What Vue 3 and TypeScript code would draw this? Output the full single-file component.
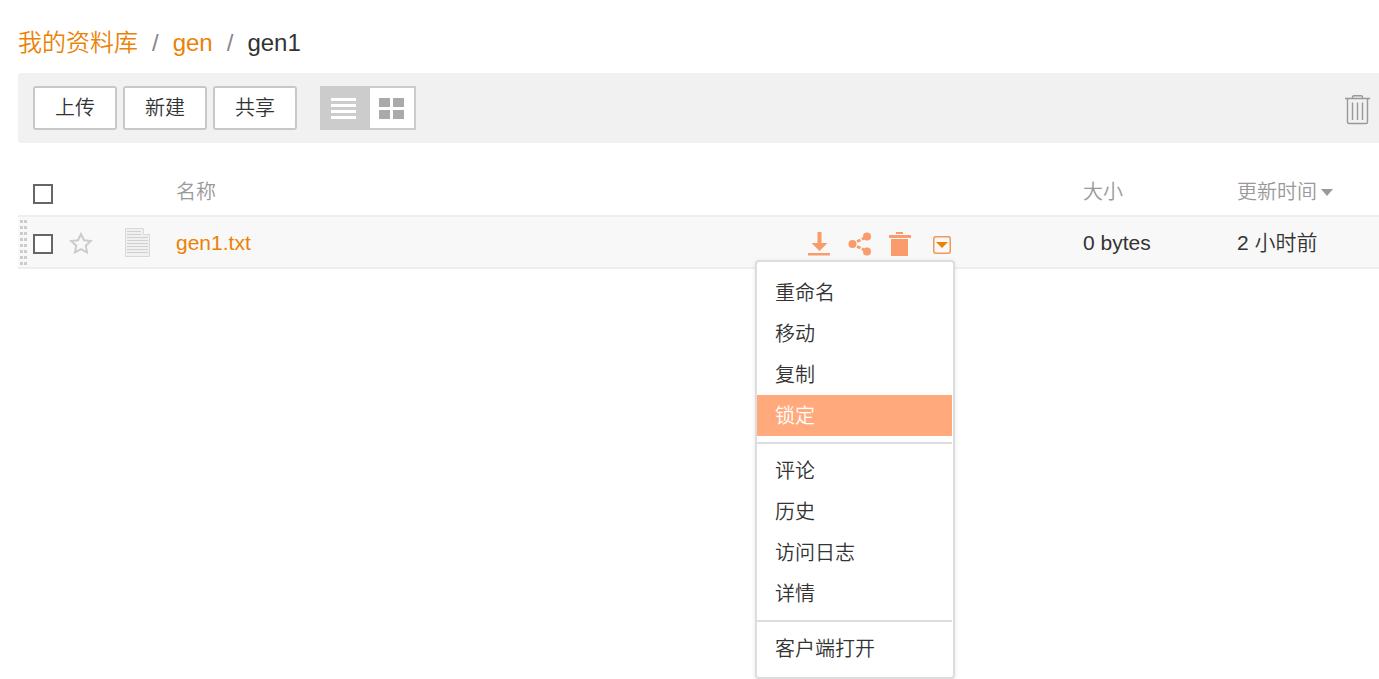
<script setup lang="ts">
import { ref } from 'vue'

interface MenuGroup {
  id: number
  items: string[]
}

const view = ref<'list' | 'grid'>('list')
const menuOpen = ref(true)
const active = ref('锁定')
const actions = ['上传', '新建', '共享']
const groups: MenuGroup[] = [
  { id: 1, items: ['重命名', '移动', '复制', '锁定'] },
  { id: 2, items: ['评论', '历史', '访问日志', '详情'] },
  { id: 3, items: ['客户端打开'] },
]
</script>

<template>
  <main class="library">
    <nav class="crumbs" aria-label="路径">
      <a href="#library">我的资料库</a>
      <span class="slash">/</span>
      <a href="#gen">gen</a>
      <span class="slash">/</span>
      <span>gen1</span>
    </nav>

    <div class="toolbar">
      <div class="buttons">
        <button v-for="a in actions" :key="a" type="button" class="btn">{{ a }}</button>
      </div>
      <div class="switch">
        <button type="button" class="mode" :class="{ on: view === 'list' }" aria-label="列表" @click="view = 'list'">
          <svg width="26" height="22" viewBox="0 -1 26 22" fill="currentColor">
            <path d="M0 0h25v3H0zM0 6h25v3H0zM0 12h25v3H0zM0 18h25v3H0z" />
          </svg>
        </button>
        <button type="button" class="mode" :class="{ on: view === 'grid' }" aria-label="网格" @click="view = 'grid'">
          <svg width="26" height="22" viewBox="0 -1 26 22" fill="currentColor">
            <path d="M0 0h11v9H0zM14 0h11v9H14zM0 12h11v9H0zM14 12h11v9H14z" />
          </svg>
        </button>
      </div>
      <button type="button" class="recycle" aria-label="回收站">
        <svg width="25" height="30" viewBox="0 0 25 30" fill="none" stroke="#999" stroke-width="1.4">
          <path d="M0 3.500H25M7.500 3.500V2Q7.500 .7 9 .7H16Q17.500 .7 17.500 2V3.500" />
          <path d="M2.500 3.500V27Q2.500 28.500 4 28.500H21Q22.500 28.500 22.500 27V3.500" />
          <path d="M7.500 7.500V25M12.500 7.500V25M17.500 7.500V25" />
        </svg>
      </button>
    </div>

    <table class="files">
      <colgroup>
        <col class="c-check" /><col class="c-star" /><col class="c-icon" /><col /><col class="c-size" /><col class="c-time" />
      </colgroup>
      <thead>
        <tr>
          <th class="check"><input type="checkbox" aria-label="全选" /></th>
          <th></th>
          <th></th>
          <th>名称</th>
          <th>大小</th>
          <th><a href="#time" class="sort">更新时间<svg width="12" height="7" viewBox="0 0 12 7"><path d="M0 0h12L6 7z" fill="#999" /></svg></a></th>
        </tr>
      </thead>
      <tbody>
        <tr>
          <td class="check">
            <div class="check-line">
              <svg class="grip" width="7" height="45" viewBox="0 0 7 45" fill="#ccc">
                <path v-for="n in 8" :key="n" :d="`M0 ${(n - 1) * 6}h3v3h-3zM4 ${(n - 1) * 6}h3v3h-3z`" />
              </svg>
              <input type="checkbox" aria-label="选择 gen1.txt" />
            </div>
          </td>
          <td>
            <button type="button" class="icon star" aria-label="星标">
              <svg width="24" height="22" viewBox="0 0 24 22" fill="none" stroke="#ccc" stroke-width="2">
                <path d="M12 2L15 8.200 21.800 9 16.800 13.700 18 20.400 12 17.200 6 20.400 7.200 13.700 2.200 9 9 8.200z" />
              </svg>
            </button>
          </td>
          <td>
            <svg class="doc" width="26" height="29" viewBox="0 0 26 29">
              <path d="M1.500 .5H19L25.500 7V28.500H1.500z" fill="#f0f0f0" stroke="#d8d8d8" />
              <path d="M19.500 .5V6.500H25.500" fill="#fafafa" stroke="#d8d8d8" />
              <path d="M3 3.500H17M3 6.500H17M3 9.500H24M3 12.500H24M3 15.500H24M3 18.500H24M3 21.500H24M3 24.500H24" stroke="#d0d0d0" />
            </svg>
          </td>
          <td>
            <div class="name-line">
              <a href="#gen1.txt" class="name">gen1.txt</a>
              <div class="ops">
                <button type="button" class="icon" aria-label="下载">
                  <svg width="24" height="25" viewBox="0 0 24 25" fill="#f99b6b">
                    <path d="M9.500 1h4v11h6l-8 8-8-8h6zM0 22h22v2.500H0z" />
                  </svg>
                </button>
                <button type="button" class="icon" aria-label="共享">
                  <svg width="24" height="25" viewBox="0 0 24 25" fill="#f99b6b">
                    <circle cx="4.500" cy="13" r="4" /><circle cx="19" cy="5.500" r="4" /><circle cx="19" cy="20.500" r="4" />
                    <path d="M9 10.600L12.500 8.900M13.800 8.300L16 7.200M9 15.400L12.500 17.100M13.800 17.700L16 18.800" stroke="#f99b6b" stroke-width="2.800" />
                  </svg>
                </button>
                <button type="button" class="icon" aria-label="删除">
                  <svg width="24" height="25" viewBox="0 0 24 25" fill="#f99b6b">
                    <path d="M8 1h7v2H8zM1 4h22v3H1zM3 8h17v17H3z" />
                  </svg>
                </button>
                <div class="more">
                  <button type="button" class="icon" aria-label="更多" @click="menuOpen = !menuOpen">
                    <svg width="18" height="18" viewBox="0 0 18 18">
                      <rect x=".75" y=".75" width="16.500" height="16.500" rx="2" fill="none" stroke="#f0975a" stroke-width="1.500" />
                      <path d="M3 6h12l-6 6z" fill="#eb8205" />
                    </svg>
                  </button>
                  <div v-if="menuOpen" class="menu" role="menu">
                    <div v-for="g in groups" :key="g.id" class="group">
                      <button
                        v-for="item in g.items" :key="item" type="button" role="menuitem"
                        class="item" :class="{ active: item === active }" @mouseenter="active = item"
                      >{{ item }}</button>
                    </div>
                  </div>
                </div>
              </div>
            </div>
          </td>
          <td class="text">0 bytes</td>
          <td class="text">2 小时前</td>
        </tr>
      </tbody>
    </table>
  </main>
</template>

<style>
body {
  margin: 0;
  background: #fff;
}
</style>

<style scoped>
.library {
  box-sizing: border-box;
  min-height: 100vh;
  padding: 24px 0 0 18px;
  color: #333;
  font-family: "Liberation Sans", "Noto Sans CJK SC", sans-serif;
  font-size: 21px;
  font-weight: 350;
}
a {
  color: #eb8205;
  text-decoration: none;
}
button {
  box-sizing: border-box;
  margin: 0;
  padding: 0;
  border: 0;
  background: none;
  color: inherit;
  font: inherit;
  cursor: pointer;
}
svg {
  display: block;
}
.crumbs {
  display: flex;
  height: 37px;
  margin-bottom: 12px;
  font-size: 24px;
  line-height: 37px;
}
.slash {
  margin: 0 14px;
  color: #888;
}
.toolbar {
  display: flex;
  align-items: center;
  height: 70px;
  padding: 0 9px 0 15px;
  box-sizing: border-box;
  border-radius: 3px 0 0 3px;
  background: #f1f1f1;
}
.buttons {
  display: flex;
  gap: 6px;
}
.btn {
  width: 84px;
  height: 44px;
  padding-top: 1px;
  border: 2px solid #c8c8c8;
  border-radius: 3px;
  background: #fff;
  font-size: 20px;
  line-height: 39px;
}
.switch {
  display: flex;
  margin-left: 23px;
  border: 2px solid #ccc;
  background: #fff;
}
.mode {
  display: flex;
  align-items: center;
  justify-content: center;
  width: 44px;
  height: 40px;
  color: #aaa;
}
.mode.on {
  width: 48px;
  padding-right: 4px;
  background: #ccc;
  color: #fff;
}
.recycle {
  margin-left: auto;
  padding-top: 3px;
}
.files {
  width: 100%;
  margin-top: 26px;
  border-spacing: 0;
  table-layout: fixed;
}
.c-check { width: 51px; }
.c-star { width: 55px; }
.c-icon { width: 52px; }
.c-size { width: 154px; }
.c-time { width: 142px; }
th,
td {
  padding: 0;
  border-bottom: 2px solid #eee;
  text-align: left;
  line-height: 30px;
}
th {
  height: 46px;
  color: #999;
  font-size: 20px;
  font-weight: 350;
}
td {
  height: 50px;
  background: #f8f8f8;
}
td.text {
  height: 48px;
  padding-top: 2px;
}
th.check {
  padding-left: 15px;
}
.check-line {
  display: flex;
  align-items: center;
  gap: 6px;
  padding-left: 2px;
}
input {
  display: block;
  box-sizing: border-box;
  width: 20px;
  height: 20px;
  margin: 3px 0 0;
  border: 2px solid #666;
  background: #fff;
  appearance: none;
}
input:checked {
  background: #666;
}
.sort {
  display: inline-flex;
  align-items: center;
  gap: 4px;
  color: #999;
}
.star,
.doc {
  margin-top: 1px;
}
.name-line {
  display: flex;
  align-items: center;
  justify-content: space-between;
  padding-right: 132px;
}
.name {
  padding-top: 2px;
}
.ops {
  display: flex;
  align-items: center;
  gap: 16px;
  padding-top: 3px;
}
.icon {
  display: block;
}
.more {
  position: relative;
  margin: 3px 0 0 5px;
}
.menu {
  position: absolute;
  top: 24px;
  right: -4px;
  box-sizing: border-box;
  width: 200px;
  padding: 10px 1px 8px 0;
  border: 2px solid #ddd;
  border-radius: 4px;
  background: #fff;
  box-shadow: 0 1px 4px rgba(0, 0, 0, 0.1);
}
.group + .group {
  margin-top: 6px;
  padding-top: 6px;
  border-top: 2px solid #ddd;
}
.item {
  display: block;
  width: 100%;
  height: 41px;
  padding: 1px 0 0 18px;
  font-size: 20px;
  line-height: 39px;
  text-align: left;
}
.item.active {
  background: #ffa97c;
  color: #fff;
}
</style>
